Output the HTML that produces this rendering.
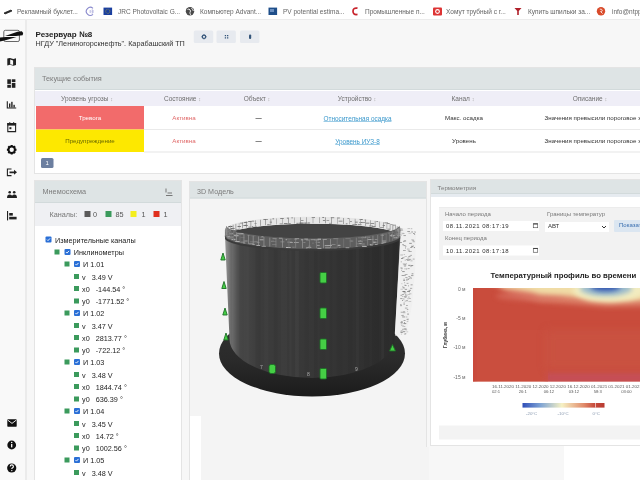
<!DOCTYPE html>
<html><head><meta charset="utf-8">
<style>
*{box-sizing:border-box;margin:0;padding:0}
html,body{width:640px;height:480px;overflow:hidden;background:#f7f7f7}
body{font-family:"Liberation Sans",sans-serif}
#w{position:absolute;left:0;top:0;width:1280px;height:960px;transform:scale(.5);transform-origin:0 0;background:#f7f7f7;overflow:hidden}
.a{position:absolute}
.bm{position:absolute;top:0;left:0;width:1280px;height:40px;background:#fff;border-bottom:2px solid #ececec}
.bmi{position:absolute;top:15px;font-size:13px;color:#666;white-space:nowrap;letter-spacing:0px}
.sb{position:absolute;left:0;top:40px;width:54px;height:922px;background:#f9f9f9;border-right:4px solid #ebebeb}
.panel{position:absolute;background:#fff;border:2px solid #e4e4e4}
.tc{text-align:center;white-space:nowrap}
.th{font-size:13px;color:#6f6f6f}
.so{color:#aaa;font-size:11px}
.td{font-size:12.4px}
.lk{color:#3a98cc;text-decoration:underline;font-size:12.8px}
.gs{position:absolute;width:10px;height:10px;background:#3b9a5c}
.sq{position:absolute;width:12px;height:12px}
.cbx{position:absolute;width:12px;height:12px;background:#2a6fd6;border-radius:2px}
.cbx svg{position:absolute;left:0;top:0}
.tt{position:absolute;font-size:14.5px;color:#1e1e1e;white-space:nowrap}
.fl{font-size:12px;color:#777;white-space:nowrap}
.dt{letter-spacing:.9px;color:#444}
.fv{font-size:12px;color:#333;white-space:nowrap}
.inp{background:#fff}
.ph{position:absolute;left:0;top:0;right:0;background:#dee4e5;color:#7c7c7c;font-size:14px;border-bottom:2px solid #d2dadb}
</style></head><body><div id="w">
<div class="bm">
 <div class="bmi" style="left:34px">Рекламный буклет...</div>
 <div class="bmi" style="left:236px">JRC Photovoltaic G...</div>
 <div class="bmi" style="left:400px">Компьютер Advant...</div>
 <div class="bmi" style="left:566px">PV potential estima...</div>
 <div class="bmi" style="left:730px">Промышленные п...</div>
 <div class="bmi" style="left:892px">Хомут трубный с г...</div>
 <div class="bmi" style="left:1056px">Купить шпильки за...</div>
 <div class="bmi" style="left:1224px">info@ntpp...</div>
</div>
<div class="sb"></div>
<div class="a" style="left:71px;top:60px;font-size:16px;font-weight:bold;color:#222">Резервуар №8</div>
<div class="a" style="left:71px;top:79px;font-size:14.5px;color:#333">НГДУ "Лениногорскнефть". Карабашский ТП</div>

<div class="panel" style="left:68px;top:134px;width:1240px;height:214px">
 <div class="ph" style="height:44px;padding:12px 0 0 14px;font-size:14.6px">Текущие события</div>
 <div class="a" style="left:0;top:44px;width:1240px;height:166px;background:#fff"></div>
 <div class="a thr" style="left:0;top:46px;width:1240px;height:30px;background:#efeef7"></div>
 <div class="a tc th" style="left:0px;top:54px;width:208px">Уровень угрозы <span class="so">↕</span></div>
 <div class="a tc th" style="left:223px;top:54px;width:144px">Состояние <span class="so">↕</span></div>
 <div class="a tc th" style="left:374px;top:54px;width:140px">Объект <span class="so">↕</span></div>
 <div class="a tc th" style="left:444px;top:54px;width:400px">Устройство <span class="so">↕</span></div>
 <div class="a tc th" style="left:756px;top:54px;width:200px">Канал <span class="so">↕</span></div>
 <div class="a tc th" style="left:1010px;top:54px;width:200px">Описание <span class="so">↕</span></div>
 <div class="a" style="left:2px;top:76px;width:216px;height:47px;background:#f26b6b"></div>
 <div class="a" style="left:2px;top:123px;width:216px;height:45px;background:#fde800"></div>
 <div class="a" style="left:218px;top:122px;width:1022px;height:2px;background:#eaeaea"></div>
 <div class="a" style="left:218px;top:167px;width:1022px;height:2px;background:#e6e6e6"></div>
 <div class="a tc td" style="left:2px;top:93px;width:216px;color:#fff">Тревога</div>
 <div class="a tc td" style="left:2px;top:139px;width:216px;color:#6b6b00">Предупреждение</div>
 <div class="a tc td" style="left:226px;top:93px;width:144px;color:#e06a6a">Активна</div>
 <div class="a tc td" style="left:226px;top:139px;width:144px;color:#e06a6a">Активна</div>
 <div class="a tc td" style="left:377px;top:92px;width:140px;color:#222;font-weight:bold">—</div>
 <div class="a tc td" style="left:377px;top:138px;width:140px;color:#222;font-weight:bold">—</div>
 <div class="a tc td lk" style="left:445px;top:93px;width:400px">Относительная осадка</div>
 <div class="a tc td lk" style="left:445px;top:139px;width:400px">Уровень ИУЗ-8</div>
 <div class="a tc td" style="left:758px;top:93px;width:200px;color:#333">Макс. осадка</div>
 <div class="a tc td" style="left:758px;top:139px;width:200px;color:#333">Уровень</div>
 <div class="a td" style="left:1019px;top:93px;white-space:nowrap;color:#333">Значения превысили пороговое значение</div>
 <div class="a td" style="left:1019px;top:139px;white-space:nowrap;color:#333">Значения превысили пороговое значение</div>
 <div class="a" style="left:12px;top:180px;width:25px;height:20px;background:#6c7fa0;border-radius:3px;color:#fff;font-size:12px;text-align:center;padding-top:3px">1</div>
</div>

<div class="panel" style="left:68px;top:360px;width:296px;height:640px">
 <div class="ph" style="height:44px;padding:13px 0 0 15px;font-size:14.6px">Мнемосхема</div>
 <div class="a" style="left:0;top:44px;width:292px;height:46px;background:#eff0f3"></div>
 <div class="a tt" style="left:29px;top:58px;color:#777">Каналы:</div>
 <div class="sq" style="left:99px;top:60px;background:#5a5a5a"></div><div class="a tt" style="left:116px;top:58px;color:#555">0</div>
 <div class="sq" style="left:141px;top:60px;background:#3b9a5c"></div><div class="a tt" style="left:161px;top:58px;color:#555">85</div>
 <div class="sq" style="left:191px;top:60px;background:#f4ee1c"></div><div class="a tt" style="left:213px;top:58px;color:#555">1</div>
 <div class="sq" style="left:237px;top:60px;background:#e0301e"></div><div class="a tt" style="left:257px;top:58px;color:#555">1</div>
 <svg class="a" style="left:258px;top:12px" width="22" height="22" viewBox="0 0 22 22"><path d="M4 3v8M7 12h9M4 17h13" stroke="#777" stroke-width="2" fill="none"/></svg>
 <div class="cbx" style="left:21.2px;top:111.0px"><svg width="12" height="12" viewBox="0 0 12 12"><path d="M3 6.2l2 2 4-4.4" stroke="#fff" stroke-width="1.8" fill="none"/></svg></div>
 <div class="tt" style="left:40.0px;top:110.0px">Измерительные каналы</div>
 <div class="gs" style="left:38.8px;top:136.5px"></div>
 <div class="cbx" style="left:58.8px;top:135.5px"><svg width="12" height="12" viewBox="0 0 12 12"><path d="M3 6.2l2 2 4-4.4" stroke="#fff" stroke-width="1.8" fill="none"/></svg></div>
 <div class="tt" style="left:77.5px;top:134.5px">Инклинометры</div>
 <div class="gs" style="left:58.8px;top:161.0px"></div>
 <div class="cbx" style="left:77.5px;top:160.0px"><svg width="12" height="12" viewBox="0 0 12 12"><path d="M3 6.2l2 2 4-4.4" stroke="#fff" stroke-width="1.8" fill="none"/></svg></div>
 <div class="tt" style="left:96.0px;top:159.0px">И 1.01</div>
 <div class="gs" style="left:77.5px;top:185.5px"></div>
 <div class="tt" style="left:94.0px;top:183.5px">v&nbsp;&nbsp;&nbsp;3.49 V</div>
 <div class="gs" style="left:77.5px;top:210.0px"></div>
 <div class="tt" style="left:94.0px;top:208.0px">x0&nbsp;&nbsp;&nbsp;-144.54 °</div>
 <div class="gs" style="left:77.5px;top:234.5px"></div>
 <div class="tt" style="left:94.0px;top:232.5px">y0&nbsp;&nbsp;&nbsp;-1771.52 °</div>
 <div class="gs" style="left:58.8px;top:259.0px"></div>
 <div class="cbx" style="left:77.5px;top:258.0px"><svg width="12" height="12" viewBox="0 0 12 12"><path d="M3 6.2l2 2 4-4.4" stroke="#fff" stroke-width="1.8" fill="none"/></svg></div>
 <div class="tt" style="left:96.0px;top:257.0px">И 1.02</div>
 <div class="gs" style="left:77.5px;top:283.5px"></div>
 <div class="tt" style="left:94.0px;top:281.5px">v&nbsp;&nbsp;&nbsp;3.47 V</div>
 <div class="gs" style="left:77.5px;top:308.0px"></div>
 <div class="tt" style="left:94.0px;top:306.0px">x0&nbsp;&nbsp;&nbsp;2813.77 °</div>
 <div class="gs" style="left:77.5px;top:332.5px"></div>
 <div class="tt" style="left:94.0px;top:330.5px">y0&nbsp;&nbsp;&nbsp;-722.12 °</div>
 <div class="gs" style="left:58.8px;top:357.0px"></div>
 <div class="cbx" style="left:77.5px;top:356.0px"><svg width="12" height="12" viewBox="0 0 12 12"><path d="M3 6.2l2 2 4-4.4" stroke="#fff" stroke-width="1.8" fill="none"/></svg></div>
 <div class="tt" style="left:96.0px;top:355.0px">И 1.03</div>
 <div class="gs" style="left:77.5px;top:381.5px"></div>
 <div class="tt" style="left:94.0px;top:379.5px">v&nbsp;&nbsp;&nbsp;3.48 V</div>
 <div class="gs" style="left:77.5px;top:406.0px"></div>
 <div class="tt" style="left:94.0px;top:404.0px">x0&nbsp;&nbsp;&nbsp;1844.74 °</div>
 <div class="gs" style="left:77.5px;top:430.5px"></div>
 <div class="tt" style="left:94.0px;top:428.5px">y0&nbsp;&nbsp;&nbsp;636.39 °</div>
 <div class="gs" style="left:58.8px;top:455.0px"></div>
 <div class="cbx" style="left:77.5px;top:454.0px"><svg width="12" height="12" viewBox="0 0 12 12"><path d="M3 6.2l2 2 4-4.4" stroke="#fff" stroke-width="1.8" fill="none"/></svg></div>
 <div class="tt" style="left:96.0px;top:453.0px">И 1.04</div>
 <div class="gs" style="left:77.5px;top:479.5px"></div>
 <div class="tt" style="left:94.0px;top:477.5px">v&nbsp;&nbsp;&nbsp;3.45 V</div>
 <div class="gs" style="left:77.5px;top:504.0px"></div>
 <div class="tt" style="left:94.0px;top:502.0px">x0&nbsp;&nbsp;&nbsp;14.72 °</div>
 <div class="gs" style="left:77.5px;top:528.5px"></div>
 <div class="tt" style="left:94.0px;top:526.5px">y0&nbsp;&nbsp;&nbsp;1002.56 °</div>
 <div class="gs" style="left:58.8px;top:553.0px"></div>
 <div class="cbx" style="left:77.5px;top:552.0px"><svg width="12" height="12" viewBox="0 0 12 12"><path d="M3 6.2l2 2 4-4.4" stroke="#fff" stroke-width="1.8" fill="none"/></svg></div>
 <div class="tt" style="left:96.0px;top:551.0px">И 1.05</div>
 <div class="gs" style="left:77.5px;top:577.5px"></div>
 <div class="tt" style="left:94.0px;top:575.5px">v&nbsp;&nbsp;&nbsp;3.48 V</div>
</div>
<div class="panel" style="left:378px;top:362px;width:476px;height:620px;background:#f4f4f4">
 <div class="ph" style="height:33px;padding:10px 0 0 14px;font-size:14.3px">3D Модель</div>
</div>
<div class="a" style="left:852px;top:894px;width:6px;height:70px;background:#f4f4f4"></div>
<div class="a" style="left:380px;top:832px;width:22px;height:130px;background:#fff"></div>
<div class="a" style="left:1128px;top:892px;width:160px;height:70px;background:#fff"></div>
<div class="panel" style="left:860px;top:358px;width:440px;height:534px">
 <div class="ph" style="height:28px;padding:8px 0 0 13px;font-size:12.4px">Термометрия</div><div class="a" style="left:0;top:28px;width:440px;height:6px;background:#e6ebf0"></div>
 <div class="a" style="left:16px;top:54px;width:430px;height:106px;background:#f2f2f2;border-top:2px solid #ececec"></div>
 <div class="a fl" style="left:28px;top:61px">Начало периода</div>
 <div class="a inp" style="left:24px;top:82px;width:192px;height:20px"></div>
 <div class="a fv dt" style="left:30px;top:84px">08.11.2021 08:17:19</div>
 <svg class="a" style="left:203px;top:85px" width="12" height="12" viewBox="0 0 12 12"><rect x="1.5" y="2.5" width="9" height="8" fill="none" stroke="#444" stroke-width="1.2"/><rect x="1.5" y="2" width="9" height="2" fill="#444"/></svg>
 <div class="a fl" style="left:28px;top:109px">Конец периода</div>
 <div class="a inp" style="left:24px;top:131px;width:192px;height:20px"></div>
 <div class="a fv dt" style="left:30px;top:134px">10.11.2021 08:17:18</div>
 <svg class="a" style="left:203px;top:134px" width="12" height="12" viewBox="0 0 12 12"><rect x="1.5" y="2.5" width="9" height="8" fill="none" stroke="#444" stroke-width="1.2"/><rect x="1.5" y="2" width="9" height="2" fill="#444"/></svg>
 <div class="a fl" style="left:232px;top:61px">Границы температур</div>
 <div class="a inp" style="left:228px;top:84px;width:128px;height:20px"></div>
 <div class="a fv" style="left:234px;top:84px">АВТ</div>
 <svg class="a" style="left:340px;top:88px" width="12" height="12" viewBox="0 0 12 12"><path d="M2 4l4 4 4-4" stroke="#333" stroke-width="2" fill="none"/></svg>
 <div class="a" style="left:366px;top:80px;width:80px;height:24px;background:#dbe6f1;border-radius:2px"></div>
 <div class="a fv" style="left:376px;top:83px;color:#3a6fb0">Показать</div>
 <div class="a" style="left:119px;top:182px;font-size:15.5px;font-weight:bold;color:#222;white-space:nowrap">Температурный профиль во времени</div>
 <svg class="a" style="left:0;top:0" width="440" height="532" viewBox="0 0 220 266">
  <defs>
   <filter id="bl1" x="-50%" y="-50%" width="200%" height="200%"><feGaussianBlur stdDeviation="4"/></filter>
   <filter id="bl2" x="-50%" y="-50%" width="200%" height="200%"><feGaussianBlur stdDeviation="2.5"/></filter>
   <clipPath id="hc"><rect x="42" y="108" width="180" height="93.5"/></clipPath>
   <linearGradient id="cb" x1="0" x2="1"><stop offset="0" stop-color="#2f4eb8"/><stop offset=".22" stop-color="#7fa4d4"/><stop offset=".48" stop-color="#f6f1c4"/><stop offset=".75" stop-color="#e08a6a"/><stop offset=".88" stop-color="#c64a3c"/><stop offset="1" stop-color="#b83a30"/></linearGradient>
  </defs>
  <g clip-path="url(#hc)">
   <rect x="42" y="108" width="180" height="94" fill="#c94c3c"/>
   <rect x="114" y="192.5" width="110" height="10" fill="#c65058" filter="url(#bl2)"/><rect x="42" y="150" width="75" height="52" fill="#cb5040" opacity=".6"/>
   <rect x="115" y="150" width="110" height="40" fill="#cb5644" filter="url(#bl1)" opacity=".6"/>
   <path d="M50 100 L62 105 L80 114 L109 122 L140 124 L175 127 L225 126 L225 100Z" fill="#dc7e66" filter="url(#bl2)"/><ellipse cx="100" cy="116" rx="35" ry="5" fill="#d87060" filter="url(#bl2)" opacity=".7"/>
   <path d="M64 100 L72 107.5 L85 109.5 L100 112 L109 114.5 L130 115.5 L148 117 L162 120.5 L180 121.5 L200 120.5 L225 119 L225 100Z" fill="#f0dca6" filter="url(#bl2)"/>
   <ellipse cx="178" cy="110" rx="36" ry="11.5" fill="#f2ecc0" filter="url(#bl2)"/>
   <ellipse cx="175" cy="108.5" rx="26" ry="7.5" fill="#9cbccc" filter="url(#bl2)"/>
   <ellipse cx="174.5" cy="107" rx="15" ry="4.2" fill="#3356b0" filter="url(#bl2)"/>
   <rect x="38" y="104" width="6" height="100" fill="#c8463a" filter="url(#bl2)"/>
  </g>
  <g font-size="5" fill="#666" text-anchor="end" font-family="Liberation Sans">
   <text x="34.5" y="110.8">0 м</text><text x="34.5" y="139.5">-5 м</text><text x="34.5" y="169.4">-10 м</text><text x="34.5" y="199.3">-15 м</text>
  </g>
  <text transform="translate(16.4 155) rotate(-90)" font-size="4.8" font-weight="bold" fill="#333" text-anchor="middle" font-family="Liberation Sans">Глубина, м</text>
  <g font-size="3.8" fill="#5a5a5a" font-family="Liberation Sans">
   <text x="61" y="207.8" textLength="150" lengthAdjust="spacingAndGlyphs">16.11.2020 11.2020 12.2020 12.2020 16.12.2020 01.2021 01.2021 01.2021</text>
   <text x="61" y="213.4" font-size="4.2">02:1</text><text x="87.7" y="213.4" font-size="4.2">26:1</text><text x="112.7" y="213.4" font-size="4.2">06:12</text><text x="137.7" y="213.4" font-size="4.2">03:12</text><text x="162.7" y="213.4" font-size="4.2">58:3</text><text x="190.2" y="213.4" font-size="4.2">03:00</text>
  </g>
  <rect x="91.5" y="223" width="82" height="4.6" fill="url(#cb)"/>
  <rect x="164.3" y="223" width="0.6" height="4.6" fill="#fff"/>
  <g font-size="4.4" fill="#8a9ab0" font-family="Liberation Sans"><text x="95" y="234.5">-20°C</text><text x="126.5" y="234.5">-10°C</text><text x="161.5" y="234.5">0°C</text></g>
 </svg>
 <div class="a" style="left:16px;top:491px;width:430px;height:28px;background:#f3f3f3"></div>
</div>
<svg class="a" style="left:0;top:0" width="1280" height="960" viewBox="0 0 640 480">
 <!-- logo -->
 <rect x="3.8" y="30.3" width="15.6" height="11.2" rx="1.5" fill="none" stroke="#555" stroke-width="0.9"/>
 <path d="M5 36 L17.5 31.8 L21.8 31.2 L23.2 33 L22.6 35.2 L16 36.1Z" fill="#111"/><path d="M0 37.4 L6 37 L16.5 36.9 L5.5 40.2 L0 41.5Z" fill="#111"/>
 <!-- map -->
 <path d="M7.3 58.6 L10 58 L13.3 59 L16 58.2 V65 L13.3 65.8 L10 64.8 L7.3 65.6Z M10.2 59.6 V64.2 L13.1 65 V60.4Z" fill="#222" fill-rule="evenodd"/>
 <!-- dashboard -->
 <rect x="7.3" y="79.3" width="3.6" height="4.6" fill="#222"/><rect x="11.8" y="79.3" width="3.6" height="2.8" fill="#222"/>
 <rect x="7.3" y="84.8" width="3.6" height="3" fill="#222"/><rect x="11.8" y="83" width="3.6" height="4.8" fill="#222"/>
 <!-- chart -->
 <path d="M7.3 101.3 V108 H16.2" stroke="#222" stroke-width="1.1" fill="none"/>
 <rect x="9" y="103.5" width="1.4" height="4" fill="#222"/><rect x="11.2" y="101.8" width="1.4" height="5.7" fill="#222"/><rect x="13.4" y="104.8" width="1.4" height="2.7" fill="#222"/>
 <!-- calendar -->
 <path d="M7.8 123.5 H15.6 V131.6 H7.8Z" fill="none" stroke="#222" stroke-width="1.1"/>
 <rect x="7.3" y="123" width="8.8" height="2.6" fill="#222"/>
 <rect x="9.2" y="122.2" width="1.1" height="1.5" fill="#222"/><rect x="13.1" y="122.2" width="1.1" height="1.5" fill="#222"/>
 <rect x="9.4" y="127.2" width="2" height="2" fill="#222"/>
 <!-- gear -->
 <g transform="translate(11.7 149.7)"><circle r="3.2" fill="none" stroke="#111" stroke-width="2"/>
 <path d="M-1 -4.8h2v1.6h-2zM-1 3.2h2v1.6h-2zM-4.8 -1v2h1.6v-2zM3.2 -1v2h1.6v-2z" fill="#111"/>
 <path d="M-1 -4.8h2v1.6h-2zM-1 3.2h2v1.6h-2zM-4.8 -1v2h1.6v-2zM3.2 -1v2h1.6v-2z" fill="#111" transform="rotate(45)"/></g>
 <!-- logout -->
 <path d="M11.5 169 H7.4 V175.6 H11.5" fill="none" stroke="#222" stroke-width="1.1"/>
 <path d="M9.5 171.4 H14 V169.8 L17 172.3 L14 174.8 V173.2 H9.5Z" fill="#222"/>
 <!-- people -->
 <circle cx="9.7" cy="192.3" r="1.3" fill="#222"/><circle cx="14.2" cy="192.3" r="1.3" fill="#222"/>
 <path d="M7 198 Q7 194.6 9.7 194.6 Q12.4 194.6 12.4 198Z M11.6 198 Q11.8 194.6 14.3 194.6 Q17 194.6 17 198Z" fill="#222"/>
 <!-- bars -->
 <rect x="7" y="211" width="1.1" height="9.4" fill="#222"/>
 <rect x="9.2" y="213" width="3.6" height="2.6" fill="#222"/><rect x="9.2" y="216.8" width="7.4" height="2.6" fill="#222"/>
 <!-- envelope -->
 <rect x="7.3" y="419.3" width="9.4" height="7.4" rx="0.6" fill="#111"/>
 <path d="M7.6 420 L12 423.4 L16.4 420" stroke="#fff" stroke-width="0.9" fill="none"/>
 <!-- info -->
 <circle cx="11.7" cy="445" r="4.4" fill="#111"/><rect x="11.05" y="444" width="1.3" height="3.4" fill="#fff"/><circle cx="11.7" cy="442.6" r="0.75" fill="#fff"/>
 <!-- help -->
 <circle cx="11.7" cy="468" r="4.6" fill="#111"/>
 <path d="M10.2 466.6 Q10.2 464.9 11.8 464.9 Q13.4 464.9 13.4 466.4 Q13.4 467.4 12.3 467.9 Q11.8 468.2 11.8 469" stroke="#fff" stroke-width="1.1" fill="none"/><circle cx="11.8" cy="470.6" r="0.7" fill="#fff"/>
 <!-- title buttons -->
 <rect x="193.8" y="30.6" width="19.4" height="12.4" rx="1.5" fill="#e7eaef"/>
 <rect x="216.5" y="30.6" width="19.4" height="12.4" rx="1.5" fill="#e7eaef"/>
 <rect x="240" y="30.6" width="19.4" height="12.4" rx="1.5" fill="#e7eaef"/>
 <circle cx="204" cy="36.8" r="1.7" fill="none" stroke="#35557a" stroke-width="1.2"/><path d="M204 34.2v0.8M204 38.6v0.8M201.4 36.8h0.8M205.8 36.8h0.8" stroke="#35557a" stroke-width="0.8"/>
 <path d="M224.8 35h1.3v1.3h-1.3zM227 35h1.3v1.3h-1.3zM224.8 37.2h1.3v1.3h-1.3zM227 37.2h1.3v1.3h-1.3z" fill="#35557a"/>
 <rect x="249" y="34.6" width="2.2" height="4.4" rx="1" fill="#35557a"/>
 <!-- bookmark icons -->
 <path d="M4 13 L11 10 L12 11 L5 14Z" fill="#222" stroke="#222" stroke-width="0.8"/>
 <path d="M93 8.3 A4 4 0 1 0 93 14.3" fill="none" stroke="#8a8acd" stroke-width="1.1"/><path d="M90.2 10 V13 M91.6 10 H93 V13 H91.6 M91.6 11.5 H92.6" fill="none" stroke="#8a8acd" stroke-width="0.6"/>
 <rect x="103.5" y="7.6" width="8.6" height="7.4" fill="#1a3fa0"/><circle cx="107.8" cy="11.3" r="2.1" fill="none" stroke="#f5d500" stroke-width="0.6" stroke-dasharray="0.5 0.6"/>
 <circle cx="190" cy="11.3" r="4.2" fill="#4a4a4a"/><path d="M187.5 9.5 Q189 8.5 190 9.8 Q191 11 190 12.5 Q189.5 14 191 14.8 M191.5 8 Q192.8 9.6 193.4 11" stroke="#fff" stroke-width="0.9" fill="none"/>
 <rect x="268.5" y="7.6" width="8.6" height="7.4" fill="#1f4f8a"/><rect x="270" y="9" width="4" height="3" fill="#6a8fc0"/>
 <path d="M357.5 8.2 Q353 7.4 353 11.3 Q353 15.2 357.5 14.4" stroke="#c8232c" stroke-width="1.7" fill="none"/>
 <rect x="433" y="7.4" width="9" height="8" rx="1" fill="#d33"/><circle cx="437.5" cy="11.5" r="2.4" fill="#fff"/><circle cx="437.5" cy="11.5" r="1.3" fill="#d33"/>
 <path d="M514.5 8 H521.5 L518.8 11 V15 H517.2 V11Z" fill="#b0202a"/>
 <circle cx="601" cy="11.2" r="4.2" fill="#d94b2b"/><path d="M599.8 9.2 Q602 8.8 602.3 10.3 Q602.4 11.5 600.6 11.6 L602.6 13.6" stroke="#fff" stroke-width="0.8" fill="none"/>
</svg>
<svg class="a" style="left:0;top:0" width="1280" height="960" viewBox="0 0 640 480">
 <defs>
  <linearGradient id="cyl" x1="225" x2="400.5" gradientUnits="userSpaceOnUse">
   <stop offset="0" stop-color="#999"/><stop offset=".03" stop-color="#6e6e6e"/><stop offset=".07" stop-color="#4a4a4a"/><stop offset=".2" stop-color="#3c3c3c"/><stop offset=".5" stop-color="#373737"/><stop offset=".85" stop-color="#2f2f2f"/><stop offset=".98" stop-color="#2a2a2a"/><stop offset="1" stop-color="#333"/>
  </linearGradient>
  <linearGradient id="plate" x1="0" x2="0" y1="311" y2="395" gradientUnits="userSpaceOnUse"><stop offset="0" stop-color="#333"/><stop offset=".6" stop-color="#2a2a2a"/><stop offset="1" stop-color="#1c1c1c"/></linearGradient>
 </defs>
 <ellipse cx="312" cy="353.5" rx="93" ry="43" fill="url(#plate)"/>
 <path d="M225 236.5 L229.5 339 A82.5 39 0 0 0 394.5 339 L400.5 236.5Z" fill="url(#cyl)"/>
<clipPath id="cylc"><path d="M225 236.5 L229.5 339 A82.5 39 0 0 0 394.5 339 L400.5 236.5Z"/></clipPath>
<g clip-path="url(#cylc)">
<rect x="232.0" y="240" width="6.8" height="150" fill="#fff" opacity="0.042"/>
<rect x="240.2" y="240" width="3.8" height="150" fill="#000" opacity="0.018"/>
<rect x="246.3" y="240" width="3.1" height="150" fill="#fff" opacity="0.012"/>
<rect x="255.4" y="240" width="5.2" height="150" fill="#000" opacity="0.036"/>
<rect x="264.3" y="240" width="4.2" height="150" fill="#fff" opacity="0.018"/>
<rect x="273.9" y="240" width="3.8" height="150" fill="#000" opacity="0.042"/>
<rect x="280.8" y="240" width="6.4" height="150" fill="#fff" opacity="0.018"/>
<rect x="289.4" y="240" width="2.1" height="150" fill="#fff" opacity="0.024"/>
<rect x="295.1" y="240" width="3.8" height="150" fill="#fff" opacity="0.030"/>
<rect x="304.8" y="240" width="4.2" height="150" fill="#000" opacity="0.024"/>
<rect x="314.0" y="240" width="3.8" height="150" fill="#000" opacity="0.042"/>
<rect x="319.6" y="240" width="5.8" height="150" fill="#000" opacity="0.036"/>
<rect x="329.6" y="240" width="3.2" height="150" fill="#000" opacity="0.018"/>
<rect x="336.4" y="240" width="6.2" height="150" fill="#000" opacity="0.024"/>
<rect x="348.0" y="240" width="4.3" height="150" fill="#000" opacity="0.030"/>
<rect x="355.8" y="240" width="3.1" height="150" fill="#fff" opacity="0.024"/>
<rect x="364.3" y="240" width="5.1" height="150" fill="#000" opacity="0.036"/>
<rect x="371.9" y="240" width="6.8" height="150" fill="#000" opacity="0.036"/>
<rect x="381.2" y="240" width="3.0" height="150" fill="#fff" opacity="0.030"/>
<rect x="389.2" y="240" width="3.7" height="150" fill="#fff" opacity="0.012"/>
</g>
 <ellipse cx="312.7" cy="236.5" rx="87.8" ry="12.8" fill="#434343"/>
 <path d="M224.9 229.5 L225.0 228.8 L225.4 228.2 L226.0 227.5 L226.8 226.8 L227.9 226.2 L229.2 225.5 L230.7 224.9 L232.5 224.3 L234.5 223.7 L236.7 223.1 L239.1 222.5 L241.7 222.0 L244.5 221.4 L247.5 220.9 L250.6 220.4 L254.0 220.0 L257.4 219.6 L261.1 219.1 L264.9 218.8 L268.8 218.4 L272.8 218.1 L277.0 217.8 L281.2 217.6 L285.6 217.3 L290.0 217.1 L294.4 217.0 L299.0 216.9 L303.5 216.8 L308.1 216.7 L312.7 216.7 L317.3 216.7 L321.9 216.8 L326.4 216.9 L331.0 217.0 L335.4 217.1 L339.8 217.3 L344.2 217.6 L348.4 217.8 L352.6 218.1 L356.6 218.4 L360.5 218.8 L364.3 219.1 L368.0 219.6 L371.4 220.0 L374.8 220.4 L377.9 220.9 L380.9 221.4 L383.7 222.0 L386.3 222.5 L388.7 223.1 L390.9 223.7 L392.9 224.3 L394.7 224.9 L396.2 225.5 L397.5 226.2 L398.6 226.8 L399.4 227.5 L400.0 228.2 L400.4 228.8 L400.5 229.5 L400.5 236.5 L400.4 235.8 L400.0 235.2 L399.4 234.5 L398.6 233.8 L397.5 233.2 L396.2 232.5 L394.7 231.9 L392.9 231.3 L390.9 230.7 L388.7 230.1 L386.3 229.5 L383.7 229.0 L380.9 228.4 L377.9 227.9 L374.8 227.4 L371.4 227.0 L368.0 226.6 L364.3 226.1 L360.5 225.8 L356.6 225.4 L352.6 225.1 L348.4 224.8 L344.2 224.6 L339.8 224.3 L335.4 224.1 L331.0 224.0 L326.4 223.9 L321.9 223.8 L317.3 223.7 L312.7 223.7 L308.1 223.7 L303.5 223.8 L299.0 223.9 L294.4 224.0 L290.0 224.1 L285.6 224.3 L281.2 224.6 L277.0 224.8 L272.8 225.1 L268.8 225.4 L264.9 225.8 L261.1 226.1 L257.4 226.6 L254.0 227.0 L250.6 227.4 L247.5 227.9 L244.5 228.4 L241.7 229.0 L239.1 229.5 L236.7 230.1 L234.5 230.7 L232.5 231.3 L230.7 231.9 L229.2 232.5 L227.9 233.2 L226.8 233.8 L226.0 234.5 L225.4 235.2 L225.0 235.8 L224.9 236.5Z" fill="#e6e6e6"/>
 <path d="M399.2 225.5 L399.1 226.2 L398.7 226.8 L398.1 227.5 L397.3 228.2 L396.2 228.8 L395.0 229.5 L393.4 230.1 L391.7 230.7 L389.8 231.3 L387.6 231.9 L385.2 232.5 L382.7 233.0 L379.9 233.6 L377.0 234.1 L373.9 234.6 L370.6 235.0 L367.1 235.4 L363.5 235.9 L359.8 236.2 L355.9 236.6 L352.0 236.9 L347.9 237.2 L343.7 237.4 L339.4 237.7 L335.1 237.9 L330.7 238.0 L326.2 238.1 L321.7 238.2 L317.2 238.3 L312.7 238.3 L308.2 238.3 L303.7 238.2 L299.2 238.1 L294.7 238.0 L290.3 237.9 L286.0 237.7 L281.7 237.4 L277.5 237.2 L273.4 236.9 L269.5 236.6 L265.6 236.2 L261.9 235.9 L258.3 235.4 L254.8 235.0 L251.5 234.6 L248.4 234.1 L245.5 233.6 L242.7 233.0 L240.2 232.5 L237.8 231.9 L235.6 231.3 L233.7 230.7 L232.0 230.1 L230.4 229.5 L229.2 228.8 L228.1 228.2 L227.3 227.5 L226.7 226.8 L226.3 226.2 L226.2 225.5 L224.9 236.5 L225.0 237.2 L225.4 237.8 L226.0 238.5 L226.8 239.2 L227.9 239.8 L229.2 240.5 L230.7 241.1 L232.5 241.7 L234.5 242.3 L236.7 242.9 L239.1 243.5 L241.7 244.0 L244.5 244.6 L247.5 245.1 L250.6 245.6 L254.0 246.0 L257.4 246.4 L261.1 246.9 L264.9 247.2 L268.8 247.6 L272.8 247.9 L277.0 248.2 L281.2 248.4 L285.6 248.7 L290.0 248.9 L294.4 249.0 L299.0 249.1 L303.5 249.2 L308.1 249.3 L312.7 249.3 L317.3 249.3 L321.9 249.2 L326.4 249.1 L331.0 249.0 L335.4 248.9 L339.8 248.7 L344.2 248.4 L348.4 248.2 L352.6 247.9 L356.6 247.6 L360.5 247.2 L364.3 246.9 L368.0 246.4 L371.4 246.0 L374.8 245.6 L377.9 245.1 L380.9 244.6 L383.7 244.0 L386.3 243.5 L388.7 242.9 L390.9 242.3 L392.9 241.7 L394.7 241.1 L396.2 240.5 L397.5 239.8 L398.6 239.2 L399.4 238.5 L400.0 237.8 L400.4 237.2 L400.5 236.5Z" fill="#5e5e5e"/>
 <path d="M225 236.5 A87.8 12.8 0 0 0 400.5 236.5 L400.5 238.5 A87.8 12.8 0 0 1 225 238.5Z" fill="#3a3a3a"/>
 <rect x="299.6" y="222.8" width="3.6" height="0.6" fill="#777"/>
<rect x="299.5" y="222.8" width="2.0" height="0.6" fill="#666"/>
<rect x="347.5" y="218.3" width="1.7" height="0.6" fill="#666"/>
<rect x="233.5" y="230.0" width="3.5" height="0.6" fill="#555"/>
<rect x="338.6" y="220.8" width="3.9" height="0.6" fill="#555"/>
<rect x="345.8" y="223.6" width="1.7" height="0.6" fill="#444"/>
<rect x="240.1" y="222.8" width="3.0" height="0.6" fill="#666"/>
<rect x="267.1" y="224.6" width="3.6" height="0.6" fill="#777"/>
<rect x="350.2" y="221.4" width="1.5" height="0.6" fill="#444"/>
<rect x="301.0" y="220.3" width="2.5" height="0.6" fill="#666"/>
<rect x="366.0" y="222.8" width="3.4" height="0.6" fill="#444"/>
<rect x="225.3" y="234.3" width="3.4" height="0.6" fill="#777"/>
<rect x="229.9" y="228.7" width="2.5" height="0.6" fill="#555"/>
<rect x="390.6" y="224.1" width="2.0" height="0.6" fill="#777"/>
<rect x="304.4" y="222.8" width="2.5" height="0.6" fill="#777"/>
<rect x="330.8" y="217.5" width="3.4" height="0.6" fill="#555"/>
<rect x="269.7" y="221.8" width="2.3" height="0.6" fill="#555"/>
<rect x="376.3" y="221.2" width="1.8" height="0.6" fill="#555"/>
<rect x="225.0" y="232.6" width="3.5" height="0.6" fill="#444"/>
<rect x="360.2" y="219.2" width="2.6" height="0.6" fill="#444"/>
<rect x="400.4" y="229.4" width="2.5" height="0.6" fill="#555"/>
<rect x="230.7" y="228.4" width="4.0" height="0.6" fill="#444"/>
<rect x="254.6" y="225.9" width="2.3" height="0.6" fill="#777"/>
<rect x="243.4" y="225.1" width="4.0" height="0.6" fill="#444"/>
<rect x="225.7" y="228.3" width="2.0" height="0.6" fill="#666"/>
<rect x="224.9" y="235.1" width="2.3" height="0.6" fill="#555"/>
<rect x="282.0" y="218.0" width="1.7" height="0.6" fill="#555"/>
<rect x="225.0" y="232.4" width="2.4" height="0.6" fill="#777"/>
<rect x="231.8" y="230.5" width="2.7" height="0.6" fill="#444"/>
<rect x="392.9" y="224.8" width="3.1" height="0.6" fill="#666"/>
<rect x="396.9" y="231.9" width="2.1" height="0.6" fill="#555"/>
<rect x="235.6" y="229.4" width="3.9" height="0.6" fill="#777"/>
<rect x="361.4" y="222.3" width="3.7" height="0.6" fill="#666"/>
<rect x="291.3" y="217.6" width="1.8" height="0.6" fill="#666"/>
<rect x="248.4" y="226.8" width="2.5" height="0.6" fill="#444"/>
<rect x="387.4" y="228.8" width="2.7" height="0.6" fill="#555"/>
<rect x="398.3" y="227.2" width="1.8" height="0.6" fill="#444"/>
<rect x="329.0" y="222.9" width="3.0" height="0.6" fill="#777"/>
<rect x="243.7" y="222.1" width="3.4" height="0.6" fill="#444"/>
<rect x="254.5" y="223.4" width="2.1" height="0.6" fill="#777"/>
<rect x="238.0" y="226.3" width="2.8" height="0.6" fill="#777"/>
<rect x="228.6" y="226.3" width="3.7" height="0.6" fill="#555"/>
<rect x="354.3" y="224.2" width="2.8" height="0.6" fill="#444"/>
<rect x="337.2" y="217.7" width="2.7" height="0.6" fill="#555"/>
<rect x="364.5" y="219.7" width="1.6" height="0.6" fill="#777"/>
<rect x="307.8" y="222.7" width="2.3" height="0.6" fill="#444"/>
<rect x="400.5" y="230.0" width="2.6" height="0.6" fill="#444"/>
<rect x="372.2" y="226.1" width="3.3" height="0.6" fill="#444"/>
<rect x="382.6" y="225.3" width="2.4" height="0.6" fill="#555"/>
<rect x="396.3" y="229.1" width="3.9" height="0.6" fill="#555"/>
<rect x="392.5" y="230.2" width="1.5" height="0.6" fill="#666"/>
<rect x="280.2" y="218.1" width="3.0" height="0.6" fill="#444"/>
<rect x="228.4" y="226.4" width="4.0" height="0.6" fill="#444"/>
<rect x="370.4" y="223.4" width="3.8" height="0.6" fill="#555"/>
<rect x="296.4" y="222.9" width="1.7" height="0.6" fill="#444"/>
<rect x="263.4" y="219.4" width="2.7" height="0.6" fill="#444"/>
<rect x="399.7" y="228.3" width="2.7" height="0.6" fill="#777"/>
<rect x="251.8" y="220.8" width="2.4" height="0.6" fill="#555"/>
<rect x="359.3" y="219.2" width="2.8" height="0.6" fill="#777"/>
<rect x="355.0" y="221.8" width="2.7" height="0.6" fill="#444"/>
<rect x="267.3" y="224.5" width="2.1" height="0.6" fill="#777"/>
<rect x="384.3" y="222.6" width="3.7" height="0.6" fill="#555"/>
<rect x="245.0" y="224.9" width="2.0" height="0.6" fill="#444"/>
<rect x="311.7" y="217.2" width="3.3" height="0.6" fill="#555"/>
<rect x="387.1" y="223.2" width="2.6" height="0.6" fill="#555"/>
<rect x="398.1" y="230.0" width="2.5" height="0.6" fill="#444"/>
<rect x="357.9" y="224.5" width="3.6" height="0.6" fill="#444"/>
<rect x="265.7" y="219.2" width="2.2" height="0.6" fill="#666"/>
<rect x="359.3" y="222.2" width="2.9" height="0.6" fill="#555"/>
<rect x="352.4" y="224.1" width="1.5" height="0.6" fill="#666"/>
<rect x="286.9" y="217.8" width="1.6" height="0.6" fill="#444"/>
<rect x="248.2" y="221.3" width="3.5" height="0.6" fill="#444"/>
<rect x="298.0" y="222.9" width="2.8" height="0.6" fill="#777"/>
<rect x="399.8" y="233.8" width="2.0" height="0.6" fill="#555"/>
<rect x="251.8" y="226.3" width="1.5" height="0.6" fill="#555"/>
<rect x="322.3" y="217.3" width="1.9" height="0.6" fill="#444"/>
<rect x="380.1" y="227.3" width="3.2" height="0.6" fill="#666"/>
<rect x="283.9" y="223.4" width="3.8" height="0.6" fill="#444"/>
<rect x="288.3" y="223.2" width="2.5" height="0.6" fill="#666"/>
<rect x="299.9" y="222.8" width="3.7" height="0.6" fill="#444"/>
<rect x="279.6" y="223.6" width="3.1" height="0.6" fill="#666"/>
<rect x="302.7" y="222.8" width="4.0" height="0.6" fill="#777"/>
<rect x="369.1" y="225.7" width="3.8" height="0.6" fill="#555"/>
<rect x="243.9" y="225.1" width="4.0" height="0.6" fill="#777"/>
<rect x="322.9" y="220.3" width="2.2" height="0.6" fill="#555"/>
<rect x="272.5" y="218.6" width="1.6" height="0.6" fill="#444"/>
<rect x="326.5" y="220.4" width="2.7" height="0.6" fill="#777"/>
<rect x="244.8" y="221.9" width="2.6" height="0.6" fill="#666"/>
<rect x="237.5" y="226.4" width="3.2" height="0.6" fill="#444"/>
<rect x="304.6" y="222.8" width="3.8" height="0.6" fill="#777"/>
<rect x="224.9" y="230.0" width="0.6" height="6" fill="#999"/>
<rect x="225.1" y="229.1" width="0.6" height="6" fill="#777"/>
<rect x="225.8" y="228.2" width="0.6" height="6" fill="#777"/>
<rect x="226.9" y="227.3" width="0.6" height="6" fill="#888"/>
<rect x="228.5" y="226.4" width="0.6" height="6" fill="#888"/>
<rect x="230.4" y="225.5" width="0.6" height="6" fill="#999"/>
<rect x="232.8" y="224.7" width="0.6" height="6" fill="#777"/>
<rect x="235.6" y="223.9" width="0.6" height="6" fill="#777"/>
<rect x="238.8" y="223.1" width="0.6" height="6" fill="#999"/>
<rect x="242.4" y="222.3" width="0.6" height="6" fill="#777"/>
<rect x="246.3" y="221.6" width="0.6" height="6" fill="#777"/>
<rect x="250.6" y="220.9" width="0.6" height="6" fill="#777"/>
<rect x="255.2" y="220.3" width="0.6" height="6" fill="#888"/>
<rect x="260.1" y="219.8" width="0.6" height="6" fill="#777"/>
<rect x="265.2" y="219.2" width="0.6" height="6" fill="#777"/>
<rect x="270.6" y="218.8" width="0.6" height="6" fill="#777"/>
<rect x="276.2" y="218.4" width="0.6" height="6" fill="#999"/>
<rect x="282.0" y="218.0" width="0.6" height="6" fill="#999"/>
<rect x="288.0" y="217.7" width="0.6" height="6" fill="#777"/>
<rect x="294.0" y="217.5" width="0.6" height="6" fill="#999"/>
<rect x="300.2" y="217.3" width="0.6" height="6" fill="#777"/>
<rect x="306.4" y="217.2" width="0.6" height="6" fill="#888"/>
<rect x="312.7" y="217.2" width="0.6" height="6" fill="#999"/>
<rect x="319.0" y="217.2" width="0.6" height="6" fill="#888"/>
<rect x="325.2" y="217.3" width="0.6" height="6" fill="#777"/>
<rect x="331.4" y="217.5" width="0.6" height="6" fill="#777"/>
<rect x="337.4" y="217.7" width="0.6" height="6" fill="#999"/>
<rect x="343.4" y="218.0" width="0.6" height="6" fill="#777"/>
<rect x="349.2" y="218.4" width="0.6" height="6" fill="#999"/>
<rect x="354.8" y="218.8" width="0.6" height="6" fill="#888"/>
<rect x="360.2" y="219.2" width="0.6" height="6" fill="#999"/>
<rect x="365.3" y="219.8" width="0.6" height="6" fill="#777"/>
<rect x="370.2" y="220.3" width="0.6" height="6" fill="#888"/>
<rect x="374.8" y="220.9" width="0.6" height="6" fill="#777"/>
<rect x="379.1" y="221.6" width="0.6" height="6" fill="#888"/>
<rect x="383.0" y="222.3" width="0.6" height="6" fill="#777"/>
<rect x="386.6" y="223.1" width="0.6" height="6" fill="#999"/>
<rect x="389.8" y="223.9" width="0.6" height="6" fill="#888"/>
<rect x="392.6" y="224.7" width="0.6" height="6" fill="#777"/>
<rect x="395.0" y="225.5" width="0.6" height="6" fill="#888"/>
<rect x="396.9" y="226.4" width="0.6" height="6" fill="#777"/>
<rect x="398.5" y="227.3" width="0.6" height="6" fill="#999"/>
<rect x="399.6" y="228.2" width="0.6" height="6" fill="#777"/>
<rect x="400.3" y="229.1" width="0.6" height="6" fill="#777"/>
<rect x="400.5" y="230.0" width="0.6" height="6" fill="#888"/>
<rect x="315.1" y="241.8" width="3.4" height="0.8" fill="#777"/>
<rect x="370.1" y="244.6" width="2.7" height="0.8" fill="#bbb"/>
<rect x="359.7" y="240.2" width="1.6" height="0.8" fill="#999"/>
<rect x="261.4" y="236.2" width="2.0" height="0.6" fill="#aaa"/>
<rect x="358.6" y="243.0" width="3.2" height="0.8" fill="#bbb"/>
<rect x="392.8" y="237.6" width="4.0" height="0.8" fill="#888"/>
<rect x="345.6" y="247.2" width="3.7" height="1" fill="#999"/>
<rect x="234.0" y="234.8" width="4.5" height="1" fill="#bbb"/>
<rect x="234.8" y="235.6" width="3.7" height="0.8" fill="#999"/>
<rect x="360.0" y="243.7" width="2.2" height="0.6" fill="#888"/>
<rect x="391.6" y="234.3" width="1.8" height="0.8" fill="#888"/>
<rect x="330.3" y="247.6" width="4.0" height="0.6" fill="#777"/>
<rect x="278.9" y="237.8" width="3.5" height="0.8" fill="#aaa"/>
<rect x="393.6" y="237.0" width="3.9" height="0.6" fill="#888"/>
<rect x="317.6" y="238.7" width="3.4" height="1" fill="#bbb"/>
<rect x="317.8" y="241.9" width="2.2" height="0.6" fill="#aaa"/>
<rect x="228.5" y="229.5" width="2.0" height="1" fill="#777"/>
<rect x="396.6" y="229.4" width="3.1" height="1" fill="#aaa"/>
<rect x="331.5" y="244.4" width="4.0" height="0.6" fill="#999"/>
<rect x="337.4" y="245.1" width="2.9" height="0.6" fill="#bbb"/>
<rect x="387.8" y="232.6" width="1.8" height="1" fill="#777"/>
<rect x="293.9" y="242.0" width="4.9" height="0.8" fill="#aaa"/>
<rect x="229.6" y="233.4" width="2.9" height="0.8" fill="#bbb"/>
<rect x="263.0" y="245.8" width="2.9" height="1" fill="#999"/>
<rect x="397.1" y="235.1" width="1.9" height="0.8" fill="#bbb"/>
<rect x="398.1" y="235.0" width="3.8" height="0.8" fill="#999"/>
<rect x="271.1" y="240.8" width="2.9" height="0.8" fill="#999"/>
<rect x="261.6" y="245.9" width="1.6" height="1" fill="#888"/>
<rect x="253.7" y="241.8" width="3.3" height="0.6" fill="#777"/>
<rect x="399.1" y="232.6" width="4.7" height="1" fill="#bbb"/>
<rect x="310.6" y="239.5" width="4.3" height="0.6" fill="#bbb"/>
<rect x="286.6" y="238.6" width="4.8" height="0.8" fill="#777"/>
<rect x="226.6" y="236.3" width="3.6" height="0.8" fill="#777"/>
<rect x="334.0" y="247.5" width="2.8" height="0.8" fill="#777"/>
<rect x="272.2" y="244.0" width="4.1" height="0.6" fill="#888"/>
<rect x="247.4" y="235.0" width="2.9" height="1" fill="#777"/>
<rect x="398.0" y="234.9" width="1.7" height="1" fill="#aaa"/>
<rect x="396.9" y="232.3" width="3.2" height="0.6" fill="#444"/>
<rect x="306.4" y="247.3" width="4.9" height="0.6" fill="#bbb"/>
<rect x="260.5" y="236.9" width="3.1" height="0.6" fill="#888"/>
<rect x="350.3" y="240.6" width="3.1" height="1" fill="#777"/>
<rect x="324.7" y="245.3" width="3.9" height="0.8" fill="#bbb"/>
<rect x="240.4" y="237.1" width="4.1" height="0.6" fill="#777"/>
<rect x="393.7" y="237.3" width="3.7" height="0.8" fill="#aaa"/>
<rect x="369.6" y="239.3" width="4.1" height="0.6" fill="#999"/>
<rect x="312.1" y="242.8" width="1.6" height="0.6" fill="#888"/>
<rect x="369.7" y="244.1" width="1.6" height="0.6" fill="#bbb"/>
<rect x="368.2" y="236.8" width="2.1" height="0.6" fill="#aaa"/>
<rect x="317.0" y="244.9" width="2.7" height="1" fill="#999"/>
<rect x="237.1" y="233.1" width="3.1" height="1" fill="#999"/>
<rect x="327.7" y="245.0" width="2.0" height="0.6" fill="#bbb"/>
<rect x="357.8" y="240.3" width="2.8" height="0.6" fill="#777"/>
<rect x="232.8" y="231.4" width="3.0" height="1" fill="#777"/>
<rect x="240.4" y="241.8" width="4.2" height="0.6" fill="#aaa"/>
<rect x="380.5" y="234.7" width="3.2" height="1" fill="#aaa"/>
<rect x="367.2" y="239.1" width="3.8" height="0.8" fill="#aaa"/>
<rect x="229.9" y="236.5" width="3.5" height="1" fill="#aaa"/>
<rect x="329.4" y="245.0" width="2.3" height="1" fill="#bbb"/>
<rect x="374.2" y="241.9" width="1.6" height="1" fill="#777"/>
<rect x="289.9" y="242.1" width="2.8" height="0.8" fill="#bbb"/>
<rect x="389.2" y="235.1" width="4.2" height="0.8" fill="#888"/>
<rect x="379.1" y="234.8" width="3.5" height="0.6" fill="#555"/>
<rect x="397.4" y="235.4" width="1.8" height="0.6" fill="#555"/>
<rect x="254.1" y="241.4" width="3.7" height="0.6" fill="#888"/>
<rect x="252.4" y="243.9" width="2.3" height="1" fill="#aaa"/>
<rect x="248.8" y="243.4" width="4.3" height="0.8" fill="#999"/>
<rect x="314.4" y="239.5" width="4.7" height="0.8" fill="#aaa"/>
<rect x="235.2" y="241.1" width="4.6" height="1" fill="#888"/>
<rect x="306.2" y="239.6" width="3.0" height="0.8" fill="#999"/>
<rect x="374.7" y="239.0" width="2.8" height="0.6" fill="#aaa"/>
<rect x="382.0" y="242.7" width="2.5" height="0.6" fill="#777"/>
<rect x="361.7" y="236.8" width="2.0" height="0.6" fill="#888"/>
<rect x="250.9" y="235.6" width="4.7" height="0.6" fill="#777"/>
<rect x="394.2" y="233.6" width="3.6" height="1" fill="#777"/>
<rect x="287.3" y="241.7" width="4.6" height="0.8" fill="#999"/>
<rect x="229.6" y="236.2" width="4.8" height="1" fill="#777"/>
<rect x="235.2" y="241.2" width="4.7" height="0.8" fill="#bbb"/>
<rect x="247.5" y="234.9" width="2.3" height="0.6" fill="#666"/>
<rect x="227.4" y="237.7" width="4.3" height="0.8" fill="#888"/>
<rect x="271.6" y="241.2" width="4.6" height="0.8" fill="#777"/>
<rect x="243.3" y="242.8" width="2.1" height="0.6" fill="#aaa"/>
<rect x="390.4" y="235.3" width="5.0" height="0.8" fill="#bbb"/>
<rect x="303.3" y="242.3" width="2.1" height="0.6" fill="#999"/>
<rect x="239.4" y="233.1" width="3.7" height="1" fill="#888"/>
<rect x="231.4" y="238.8" width="4.1" height="1" fill="#bbb"/>
<rect x="362.7" y="239.8" width="4.7" height="0.6" fill="#777"/>
<rect x="381.3" y="242.8" width="2.1" height="0.8" fill="#aaa"/>
<rect x="361.1" y="237.2" width="5.0" height="1" fill="#888"/>
<rect x="349.6" y="240.6" width="2.9" height="0.8" fill="#888"/>
<rect x="272.5" y="238.3" width="4.0" height="0.8" fill="#999"/>
<rect x="365.0" y="236.6" width="1.5" height="1" fill="#999"/>
<rect x="230.3" y="233.1" width="2.8" height="1" fill="#aaa"/>
<rect x="227.1" y="236.9" width="1.8" height="0.6" fill="#999"/>
<rect x="345.4" y="238.1" width="4.8" height="1" fill="#777"/>
<rect x="256.8" y="242.2" width="2.8" height="0.6" fill="#999"/>
<rect x="280.4" y="241.6" width="4.0" height="0.6" fill="#999"/>
<rect x="338.8" y="247.3" width="1.8" height="0.6" fill="#888"/>
<rect x="388.9" y="232.5" width="4.2" height="0.8" fill="#777"/>
<rect x="228.5" y="232.6" width="4.2" height="1" fill="#777"/>
<rect x="317.4" y="247.9" width="4.0" height="1" fill="#aaa"/>
<rect x="226.4" y="230.4" width="3.6" height="0.6" fill="#666"/>
<rect x="356.5" y="243.3" width="3.0" height="1" fill="#777"/>
<rect x="381.9" y="240.5" width="4.4" height="1" fill="#999"/>
<rect x="373.1" y="241.7" width="2.7" height="1" fill="#bbb"/>
<rect x="390.7" y="235.6" width="3.3" height="1" fill="#999"/>
<rect x="294.5" y="239.2" width="2.2" height="0.6" fill="#999"/>
<rect x="374.9" y="244.1" width="2.7" height="0.8" fill="#aaa"/>
<rect x="322.7" y="239.2" width="4.1" height="0.6" fill="#bbb"/>
<rect x="300.9" y="239.3" width="2.4" height="1" fill="#aaa"/>
<rect x="285.6" y="239.2" width="1.5" height="1" fill="#aaa"/>
<rect x="375.6" y="241.7" width="2.1" height="1" fill="#888"/>
<rect x="325.1" y="247.3" width="5.0" height="1" fill="#999"/>
<rect x="361.8" y="245.7" width="3.7" height="0.6" fill="#999"/>
<rect x="382.7" y="241.9" width="3.3" height="0.6" fill="#bbb"/>
<rect x="337.9" y="244.8" width="2.4" height="1" fill="#aaa"/>
<rect x="398.0" y="228.9" width="4.3" height="0.8" fill="#777"/>
<rect x="286.0" y="247.0" width="4.6" height="1" fill="#bbb"/>
<rect x="250.0" y="241.3" width="5.0" height="1" fill="#777"/>
<rect x="238.9" y="233.3" width="4.7" height="1" fill="#aaa"/>
<rect x="305.9" y="247.7" width="1.6" height="0.6" fill="#aaa"/>
<rect x="256.4" y="245.0" width="3.6" height="0.8" fill="#bbb"/>
<rect x="232.6" y="233.9" width="3.1" height="1" fill="#777"/>
<rect x="226.5" y="236.3" width="3.3" height="0.6" fill="#bbb"/>
<rect x="362.1" y="246.0" width="4.6" height="1" fill="#aaa"/>
<rect x="233.7" y="240.3" width="2.1" height="1" fill="#777"/>
<rect x="294.7" y="238.5" width="4.3" height="0.6" fill="#bbb"/>
<rect x="292.3" y="246.8" width="2.4" height="0.8" fill="#888"/>
<rect x="357.9" y="237.3" width="3.1" height="1" fill="#777"/>
<rect x="390.8" y="234.5" width="1.6" height="0.8" fill="#aaa"/>
<rect x="358.0" y="240.9" width="4.9" height="0.8" fill="#999"/>
<rect x="382.2" y="233.7" width="4.4" height="0.8" fill="#777"/>
<rect x="399.1" y="230.2" width="2.3" height="0.6" fill="#444"/>
<rect x="362.2" y="243.6" width="2.5" height="0.8" fill="#999"/>
<rect x="355.6" y="246.0" width="2.1" height="0.8" fill="#888"/>
<rect x="259.6" y="239.3" width="4.0" height="1" fill="#aaa"/>
<rect x="244.3" y="240.7" width="3.3" height="0.6" fill="#bbb"/>
<rect x="308.4" y="245.8" width="2.1" height="0.6" fill="#aaa"/>
<rect x="391.8" y="231.6" width="1.8" height="1" fill="#888"/>
<rect x="304.3" y="238.6" width="3.6" height="1" fill="#aaa"/>
<rect x="333.3" y="238.5" width="5.0" height="0.6" fill="#999"/>
<rect x="399.2" y="226.5" width="0.7" height="9" fill="#777"/>
<rect x="398.9" y="227.5" width="0.7" height="9" fill="#888"/>
<rect x="398.1" y="228.6" width="0.7" height="9" fill="#999"/>
<rect x="396.7" y="229.6" width="0.7" height="9" fill="#999"/>
<rect x="394.7" y="230.6" width="0.7" height="9" fill="#777"/>
<rect x="392.3" y="231.5" width="0.7" height="9" fill="#777"/>
<rect x="389.3" y="232.4" width="0.7" height="9" fill="#777"/>
<rect x="385.8" y="233.3" width="0.7" height="9" fill="#777"/>
<rect x="381.8" y="234.2" width="0.7" height="9" fill="#999"/>
<rect x="377.4" y="235.0" width="0.7" height="9" fill="#888"/>
<rect x="372.6" y="235.7" width="0.7" height="9" fill="#999"/>
<rect x="367.4" y="236.4" width="0.7" height="9" fill="#888"/>
<rect x="361.8" y="237.0" width="0.7" height="9" fill="#777"/>
<rect x="355.9" y="237.6" width="0.7" height="9" fill="#888"/>
<rect x="349.8" y="238.1" width="0.7" height="9" fill="#777"/>
<rect x="343.4" y="238.5" width="0.7" height="9" fill="#777"/>
<rect x="336.8" y="238.8" width="0.7" height="9" fill="#777"/>
<rect x="330.0" y="239.0" width="0.7" height="9" fill="#999"/>
<rect x="323.1" y="239.2" width="0.7" height="9" fill="#999"/>
<rect x="316.2" y="239.3" width="0.7" height="9" fill="#888"/>
<rect x="309.2" y="239.3" width="0.7" height="9" fill="#888"/>
<rect x="302.3" y="239.2" width="0.7" height="9" fill="#999"/>
<rect x="295.4" y="239.0" width="0.7" height="9" fill="#888"/>
<rect x="288.6" y="238.8" width="0.7" height="9" fill="#777"/>
<rect x="282.0" y="238.5" width="0.7" height="9" fill="#999"/>
<rect x="275.6" y="238.1" width="0.7" height="9" fill="#888"/>
<rect x="269.5" y="237.6" width="0.7" height="9" fill="#999"/>
<rect x="263.6" y="237.0" width="0.7" height="9" fill="#999"/>
<rect x="258.0" y="236.4" width="0.7" height="9" fill="#999"/>
<rect x="252.8" y="235.7" width="0.7" height="9" fill="#999"/>
<rect x="248.0" y="235.0" width="0.7" height="9" fill="#999"/>
<rect x="243.6" y="234.2" width="0.7" height="9" fill="#999"/>
<rect x="239.6" y="233.3" width="0.7" height="9" fill="#777"/>
<rect x="236.1" y="232.4" width="0.7" height="9" fill="#999"/>
<rect x="233.1" y="231.5" width="0.7" height="9" fill="#777"/>
<rect x="230.7" y="230.6" width="0.7" height="9" fill="#777"/>
<rect x="228.7" y="229.6" width="0.7" height="9" fill="#999"/>
<rect x="227.3" y="228.6" width="0.7" height="9" fill="#888"/>
<rect x="226.5" y="227.5" width="0.7" height="9" fill="#777"/>
<rect x="226.2" y="226.5" width="0.7" height="9" fill="#999"/>
<path d="M400.5 228 L410 229 L416 234 L415 270 L412 305 L406 334 L395 336Z" fill="#ececec" opacity=".6"/>
<rect x="407.5" y="294.0" width="2.4" height="0.75" fill="#bbb"/>
<rect x="407.3" y="231.1" width="2.7" height="0.75" fill="#888"/>
<rect x="400.8" y="323.5" width="1.7" height="0.75" fill="#999"/>
<rect x="401.3" y="268.4" width="1.3" height="0.75" fill="#999"/>
<rect x="402.2" y="271.3" width="2.5" height="0.75" fill="#777"/>
<rect x="411.5" y="244.9" width="1.1" height="0.75" fill="#bbb"/>
<rect x="401.6" y="275.2" width="2.7" height="0.75" fill="#888"/>
<rect x="403.0" y="250.2" width="2.8" height="0.75" fill="#999"/>
<rect x="412.7" y="258.7" width="1.9" height="0.75" fill="#999"/>
<rect x="413.8" y="247.3" width="1.2" height="0.75" fill="#777"/>
<rect x="404.7" y="259.7" width="1.1" height="0.75" fill="#999"/>
<rect x="404.5" y="256.0" width="2.4" height="0.75" fill="#bbb"/>
<rect x="410.8" y="228.4" width="1.5" height="0.75" fill="#aaa"/>
<rect x="403.9" y="265.7" width="2.2" height="0.75" fill="#999"/>
<rect x="408.0" y="279.0" width="0.9" height="0.75" fill="#888"/>
<rect x="402.5" y="328.6" width="1.6" height="0.75" fill="#bbb"/>
<rect x="403.1" y="311.5" width="2.0" height="0.75" fill="#888"/>
<rect x="408.3" y="276.0" width="2.0" height="0.75" fill="#999"/>
<rect x="403.7" y="240.6" width="2.4" height="0.75" fill="#777"/>
<rect x="404.5" y="264.5" width="1.8" height="0.75" fill="#777"/>
<rect x="411.2" y="239.5" width="2.4" height="0.75" fill="#aaa"/>
<rect x="414.8" y="231.9" width="1.0" height="0.75" fill="#aaa"/>
<rect x="404.0" y="282.4" width="1.1" height="0.75" fill="#aaa"/>
<rect x="403.9" y="326.0" width="1.4" height="0.75" fill="#aaa"/>
<rect x="410.4" y="260.5" width="2.1" height="0.75" fill="#aaa"/>
<rect x="401.0" y="333.7" width="0.9" height="0.75" fill="#bbb"/>
<rect x="404.4" y="284.6" width="1.3" height="0.75" fill="#bbb"/>
<rect x="403.2" y="264.4" width="2.1" height="0.75" fill="#999"/>
<rect x="414.2" y="233.9" width="0.9" height="0.75" fill="#777"/>
<rect x="402.7" y="263.4" width="2.8" height="0.75" fill="#bbb"/>
<rect x="404.4" y="328.7" width="2.4" height="0.75" fill="#888"/>
<rect x="405.4" y="245.9" width="0.9" height="0.75" fill="#777"/>
<rect x="406.0" y="259.3" width="2.8" height="0.75" fill="#999"/>
<rect x="403.0" y="331.5" width="1.8" height="0.75" fill="#aaa"/>
<rect x="403.3" y="278.8" width="1.6" height="0.75" fill="#999"/>
<rect x="412.3" y="239.9" width="1.9" height="0.75" fill="#999"/>
<rect x="405.0" y="294.5" width="1.5" height="0.75" fill="#888"/>
<rect x="405.8" y="280.1" width="1.9" height="0.75" fill="#bbb"/>
<rect x="409.9" y="266.3" width="2.3" height="0.75" fill="#bbb"/>
<rect x="407.3" y="298.4" width="1.5" height="0.75" fill="#aaa"/>
<rect x="402.1" y="316.5" width="2.8" height="0.75" fill="#aaa"/>
<rect x="402.3" y="329.4" width="1.2" height="0.75" fill="#888"/>
<rect x="408.9" y="278.3" width="1.5" height="0.75" fill="#aaa"/>
<rect x="409.5" y="277.1" width="2.1" height="0.75" fill="#aaa"/>
<rect x="408.2" y="264.9" width="2.3" height="0.75" fill="#777"/>
<rect x="410.7" y="265.1" width="2.5" height="0.75" fill="#777"/>
<rect x="406.4" y="331.5" width="1.8" height="0.75" fill="#bbb"/>
<rect x="401.3" y="331.9" width="1.5" height="0.75" fill="#777"/>
<rect x="401.0" y="258.0" width="2.1" height="0.75" fill="#777"/>
<rect x="411.2" y="246.2" width="2.0" height="0.75" fill="#777"/>
<rect x="407.3" y="260.1" width="2.5" height="0.75" fill="#aaa"/>
<rect x="400.3" y="304.4" width="1.1" height="0.75" fill="#777"/>
<rect x="401.8" y="294.2" width="2.3" height="0.75" fill="#999"/>
<rect x="400.4" y="294.9" width="1.7" height="0.75" fill="#999"/>
<rect x="412.9" y="245.6" width="1.0" height="0.75" fill="#999"/>
<rect x="406.2" y="279.2" width="1.6" height="0.75" fill="#aaa"/>
<rect x="407.6" y="268.3" width="2.0" height="0.75" fill="#999"/>
<rect x="403.4" y="304.1" width="1.5" height="0.75" fill="#aaa"/>
<rect x="406.8" y="318.7" width="2.2" height="0.75" fill="#bbb"/>
<rect x="400.4" y="267.6" width="2.0" height="0.75" fill="#888"/>
<rect x="406.8" y="259.3" width="2.7" height="0.75" fill="#aaa"/>
<rect x="405.6" y="329.6" width="1.6" height="0.75" fill="#bbb"/>
<rect x="403.6" y="296.1" width="1.1" height="0.75" fill="#bbb"/>
<rect x="405.9" y="268.6" width="1.2" height="0.75" fill="#999"/>
<rect x="403.6" y="292.5" width="2.6" height="0.75" fill="#888"/>
<rect x="404.0" y="268.5" width="2.6" height="0.75" fill="#bbb"/>
<rect x="409.2" y="242.9" width="2.6" height="0.75" fill="#777"/>
<rect x="411.6" y="273.5" width="1.8" height="0.75" fill="#777"/>
<rect x="402.6" y="331.1" width="2.7" height="0.75" fill="#999"/>
<rect x="402.7" y="291.2" width="2.8" height="0.75" fill="#777"/>
<rect x="400.3" y="254.6" width="2.7" height="0.75" fill="#aaa"/>
<rect x="403.2" y="280.1" width="1.8" height="0.75" fill="#888"/>
<rect x="409.3" y="298.0" width="1.3" height="0.75" fill="#888"/>
<rect x="407.1" y="310.9" width="0.8" height="0.75" fill="#bbb"/>
<rect x="402.6" y="287.4" width="1.7" height="0.75" fill="#888"/>
<rect x="403.7" y="254.0" width="1.1" height="0.75" fill="#aaa"/>
<rect x="408.0" y="259.1" width="1.7" height="0.75" fill="#bbb"/>
<rect x="406.8" y="321.3" width="0.8" height="0.75" fill="#999"/>
<rect x="407.0" y="259.9" width="1.5" height="0.75" fill="#aaa"/>
<rect x="400.2" y="305.5" width="1.5" height="0.75" fill="#bbb"/>
<rect x="400.0" y="242.0" width="1.9" height="0.75" fill="#888"/>
<rect x="404.1" y="322.1" width="0.8" height="0.75" fill="#777"/>
<rect x="407.1" y="291.1" width="2.7" height="0.75" fill="#777"/>
<rect x="406.6" y="319.0" width="1.8" height="0.75" fill="#999"/>
<rect x="403.5" y="323.3" width="2.3" height="0.75" fill="#aaa"/>
<rect x="405.6" y="316.6" width="1.7" height="0.75" fill="#aaa"/>
<rect x="404.6" y="296.7" width="1.4" height="0.75" fill="#999"/>
<rect x="406.3" y="278.7" width="1.8" height="0.75" fill="#aaa"/>
<rect x="404.6" y="285.0" width="1.9" height="0.75" fill="#888"/>
<rect x="403.5" y="235.3" width="2.4" height="0.75" fill="#888"/>
<rect x="400.2" y="298.3" width="2.2" height="0.75" fill="#888"/>
<rect x="404.5" y="333.8" width="0.9" height="0.75" fill="#888"/>
<rect x="409.0" y="251.2" width="2.7" height="0.75" fill="#999"/>
<rect x="404.6" y="333.4" width="1.7" height="0.75" fill="#999"/>
<rect x="404.2" y="292.7" width="1.1" height="0.75" fill="#bbb"/>
<rect x="407.8" y="250.6" width="2.1" height="0.75" fill="#888"/>
<rect x="407.6" y="257.7" width="1.0" height="0.75" fill="#777"/>
<rect x="401.0" y="321.1" width="1.7" height="0.75" fill="#aaa"/>
<rect x="404.6" y="300.7" width="1.5" height="0.75" fill="#aaa"/>
<rect x="401.0" y="325.0" width="1.4" height="0.75" fill="#bbb"/>
<rect x="405.0" y="294.9" width="2.6" height="0.75" fill="#bbb"/>
<rect x="402.4" y="286.3" width="0.9" height="0.75" fill="#999"/>
<rect x="410.2" y="254.9" width="1.8" height="0.75" fill="#999"/>
<rect x="407.2" y="313.7" width="1.7" height="0.75" fill="#777"/>
<rect x="410.2" y="247.0" width="2.1" height="0.75" fill="#888"/>
<rect x="400.4" y="288.8" width="2.5" height="0.75" fill="#bbb"/>
<rect x="402.5" y="291.0" width="2.6" height="0.75" fill="#777"/>
<rect x="400.7" y="330.1" width="1.9" height="0.75" fill="#bbb"/>
<rect x="400.5" y="304.9" width="1.1" height="0.75" fill="#777"/>
<rect x="402.1" y="300.2" width="1.0" height="0.75" fill="#777"/>
<rect x="401.1" y="315.0" width="2.0" height="0.75" fill="#aaa"/>
<rect x="402.3" y="316.6" width="2.7" height="0.75" fill="#aaa"/>
<rect x="403.2" y="312.4" width="2.2" height="0.75" fill="#aaa"/>
<rect x="407.9" y="296.7" width="1.7" height="0.75" fill="#aaa"/>
<rect x="406.6" y="282.9" width="1.9" height="0.75" fill="#999"/>
<rect x="401.2" y="269.9" width="0.9" height="0.75" fill="#999"/>
<rect x="406.9" y="248.7" width="2.7" height="0.75" fill="#aaa"/>
<rect x="407.5" y="228.0" width="2.6" height="0.75" fill="#bbb"/>
<rect x="402.3" y="325.7" width="1.7" height="0.75" fill="#999"/>
<rect x="402.3" y="244.4" width="1.5" height="0.75" fill="#777"/>
<rect x="403.6" y="320.1" width="1.9" height="0.75" fill="#888"/>
<rect x="402.2" y="257.4" width="1.4" height="0.75" fill="#999"/>
<rect x="414.1" y="231.5" width="1.5" height="0.75" fill="#aaa"/>
<rect x="400.8" y="261.5" width="0.8" height="0.75" fill="#777"/>
<rect x="410.9" y="278.0" width="1.0" height="0.75" fill="#aaa"/>
<rect x="408.9" y="258.9" width="2.3" height="0.75" fill="#999"/>
<rect x="411.2" y="231.6" width="1.9" height="0.75" fill="#888"/>
<rect x="409.2" y="293.5" width="2.2" height="0.75" fill="#aaa"/>
<rect x="405.1" y="247.6" width="0.9" height="0.75" fill="#777"/>
<rect x="403.5" y="245.3" width="2.1" height="0.75" fill="#888"/>
<rect x="404.2" y="296.5" width="2.8" height="0.75" fill="#888"/>
<rect x="405.3" y="277.0" width="2.2" height="0.75" fill="#999"/>
<rect x="408.5" y="232.8" width="2.8" height="0.75" fill="#bbb"/>
<rect x="410.0" y="287.9" width="2.2" height="0.75" fill="#999"/>
<rect x="403.6" y="323.3" width="2.7" height="0.75" fill="#888"/>
<rect x="406.1" y="300.4" width="1.8" height="0.75" fill="#888"/>
<rect x="413.0" y="233.1" width="1.7" height="0.75" fill="#888"/>
<rect x="407.3" y="320.8" width="1.2" height="0.75" fill="#bbb"/>
<rect x="401.9" y="295.9" width="1.3" height="0.75" fill="#aaa"/>
<rect x="400.7" y="311.8" width="2.8" height="0.75" fill="#999"/>
<rect x="408.8" y="291.4" width="1.2" height="0.75" fill="#888"/>
<rect x="404.2" y="274.8" width="1.6" height="0.75" fill="#777"/>
<rect x="401.5" y="283.4" width="0.8" height="0.75" fill="#aaa"/>
<rect x="408.4" y="301.0" width="2.8" height="0.75" fill="#bbb"/>
<rect x="404.6" y="240.3" width="1.0" height="0.75" fill="#aaa"/>
<rect x="402.6" y="314.9" width="1.1" height="0.75" fill="#888"/>
<rect x="408.0" y="278.0" width="2.4" height="0.75" fill="#bbb"/>
<rect x="402.7" y="298.6" width="1.8" height="0.75" fill="#999"/>
<rect x="403.1" y="233.1" width="1.4" height="0.75" fill="#aaa"/>
<rect x="400.5" y="321.9" width="2.3" height="0.75" fill="#777"/>
<rect x="404.9" y="307.7" width="2.6" height="0.75" fill="#999"/>
<rect x="404.7" y="288.9" width="2.4" height="0.75" fill="#888"/>
<rect x="406.3" y="305.2" width="1.3" height="0.75" fill="#777"/>
<rect x="403.4" y="287.6" width="1.4" height="0.75" fill="#999"/>
<rect x="409.1" y="255.8" width="1.4" height="0.75" fill="#888"/>
<rect x="408.0" y="285.5" width="0.9" height="0.75" fill="#888"/>
<rect x="402.0" y="233.4" width="1.5" height="0.75" fill="#aaa"/>
<rect x="404.3" y="328.6" width="1.3" height="0.75" fill="#777"/>
<rect x="403.0" y="241.3" width="1.5" height="0.75" fill="#999"/>
<rect x="408.6" y="289.9" width="2.3" height="0.75" fill="#888"/>
<rect x="408.1" y="256.4" width="2.1" height="0.75" fill="#999"/>
<rect x="411.0" y="275.3" width="2.4" height="0.75" fill="#888"/>
<rect x="405.7" y="263.3" width="1.3" height="0.75" fill="#bbb"/>
<rect x="405.2" y="274.0" width="2.3" height="0.75" fill="#999"/>
<rect x="410.6" y="284.5" width="2.0" height="0.75" fill="#888"/>
<rect x="412.6" y="241.4" width="2.2" height="0.75" fill="#999"/>
<rect x="400.2" y="331.7" width="2.0" height="0.75" fill="#777"/>
<rect x="403.3" y="302.7" width="1.7" height="0.75" fill="#999"/>
<rect x="402.7" y="257.4" width="1.9" height="0.75" fill="#aaa"/>
<rect x="406.8" y="309.0" width="1.5" height="0.75" fill="#999"/>
 <g fill="#45cf45" stroke="#1d6e26" stroke-width="0.9">
  <rect x="320" y="272.5" width="6.5" height="10.5" rx="1"/>
  <rect x="320" y="308" width="6.5" height="10.5" rx="1"/>
  <rect x="320" y="339" width="6.5" height="10.5" rx="1"/>
  <rect x="320" y="368.5" width="6.5" height="10.5" rx="1"/>
  <rect x="269" y="364.5" width="6.5" height="9" rx="2"/>
  <path d="M389.5 351 L392.5 344.5 L395.5 351Z"/>
  <path d="M220.8 260 L223 253 L225.2 260Z"/>
  <path d="M221.8 288.5 L224 281.5 L226.2 288.5Z"/>
  <path d="M222.8 315 L225 308 L227.2 315Z"/>
  <path d="M223.8 340 L226 333 L228.2 340Z"/>
 </g>
 <g font-size="5" fill="#aaa" font-family="Liberation Sans"><text x="260" y="369">7</text><text x="307" y="375.5">8</text><text x="355" y="371">9</text></g>
</svg>
</div></body></html>
